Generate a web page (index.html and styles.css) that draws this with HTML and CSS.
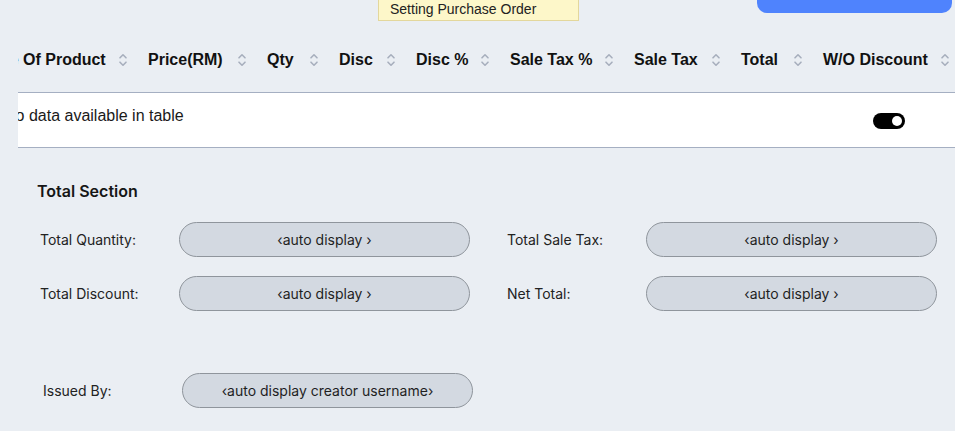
FILE: index.html
```html
<!DOCTYPE html>
<html lang="en">
<head>
<meta charset="utf-8">
<title>Purchase Order</title>
<link rel="stylesheet" href="styles.css">
</head>
<body>
<div class="page">
  <div class="toolbar">
    <button class="btn-primary" type="button">Apply Supplier Copy</button>
  </div>

  <div class="tip">Setting Purchase Order</div>

  <div class="table-scroll">
    <div class="table">
      <div class="thead">
        <div class="th"><span>Name Of Product</span><svg class="sort" viewBox="0 0 10 14" width="10" height="14"><path d="M2 4.8 5 1.8 8 4.8M2 9.2 5 12.2 8 9.2"/></svg></div>
        <div class="th"><span>Price(RM)</span><svg class="sort" viewBox="0 0 10 14" width="10" height="14"><path d="M2 4.8 5 1.8 8 4.8M2 9.2 5 12.2 8 9.2"/></svg></div>
        <div class="th"><span>Qty</span><svg class="sort" viewBox="0 0 10 14" width="10" height="14"><path d="M2 4.8 5 1.8 8 4.8M2 9.2 5 12.2 8 9.2"/></svg></div>
        <div class="th"><span>Disc</span><svg class="sort" viewBox="0 0 10 14" width="10" height="14"><path d="M2 4.8 5 1.8 8 4.8M2 9.2 5 12.2 8 9.2"/></svg></div>
        <div class="th"><span>Disc %</span><svg class="sort" viewBox="0 0 10 14" width="10" height="14"><path d="M2 4.8 5 1.8 8 4.8M2 9.2 5 12.2 8 9.2"/></svg></div>
        <div class="th"><span>Sale Tax %</span><svg class="sort" viewBox="0 0 10 14" width="10" height="14"><path d="M2 4.8 5 1.8 8 4.8M2 9.2 5 12.2 8 9.2"/></svg></div>
        <div class="th"><span>Sale Tax</span><svg class="sort" viewBox="0 0 10 14" width="10" height="14"><path d="M2 4.8 5 1.8 8 4.8M2 9.2 5 12.2 8 9.2"/></svg></div>
        <div class="th"><span>Total</span><svg class="sort" viewBox="0 0 10 14" width="10" height="14"><path d="M2 4.8 5 1.8 8 4.8M2 9.2 5 12.2 8 9.2"/></svg></div>
        <div class="th"><span>W/O Discount</span><svg class="sort" viewBox="0 0 10 14" width="10" height="14"><path d="M2 4.8 5 1.8 8 4.8M2 9.2 5 12.2 8 9.2"/></svg></div>
      </div>
      <div class="trow">
        <span class="empty">No data available in table</span>
        <span class="toggle" role="switch" aria-checked="true"><span class="knob"></span></span>
      </div>
    </div>
  </div>

  <section class="totals">
    <h3 class="totals-title">Total Section</h3>
    <div class="field-grid">
      <div class="field"><span class="label">Total Quantity:</span><span class="pill">‹auto display ›</span></div>
      <div class="field"><span class="label">Total Sale Tax:</span><span class="pill">‹auto display ›</span></div>
      <div class="field"><span class="label">Total Discount:</span><span class="pill">‹auto display ›</span></div>
      <div class="field"><span class="label">Net Total:</span><span class="pill">‹auto display ›</span></div>
    </div>
    <div class="field issued"><span class="label">Issued By:</span><span class="pill">‹auto display creator username›</span></div>
  </section>
</div>
</body>
</html>
```

FILE: styles.css
```css
html, body {
  margin: 0;
  padding: 0;
  height: 100%;
  overflow: hidden;
}

body {
  background: #eaeef3;
  font-family: Inter, "Noto Sans", sans-serif;
  color: #1f1f1f;
}

.page {
  position: relative;
  width: 955px;
}

.toolbar {
  height: 25px;
  display: flex;
  justify-content: flex-end;
  padding-right: 3px;
}

.btn-primary {
  width: 195px;
  height: 40px;
  margin-top: -27px;
  padding: 0 0 5px;
  border: none;
  border-radius: 10px;
  background: #4f83fd;
  color: #ffffff;
  font-family: Inter, sans-serif;
  font-size: 14px;
  font-weight: 500;
}

.tip {
  position: absolute;
  left: 378px;
  top: -1px;
  width: 201px;
  height: 22px;
  box-sizing: border-box;
  padding-left: 11px;
  border: 1px solid #e3d79c;
  background: #fdf7c9;
  font-family: "Liberation Sans", Arial, sans-serif;
  font-size: 14px;
  line-height: 19px;
  color: #222;
  z-index: 5;
}

.table-scroll {
  margin-left: 18px;
  overflow: hidden;
}

.table {
  width: 995px;
  margin-left: -53px;
  font-family: "Liberation Sans", Arial, sans-serif;
}

.thead {
  display: grid;
  grid-template-columns: 173px 119px 72px 77px 94px 124px 107px 82px 147px;
  height: 65px;
  padding-top: 2px;
  border-bottom: 1px solid #a5afc2;
}

.th {
  display: flex;
  align-items: center;
  justify-content: space-between;
  padding: 0 10px;
  font-size: 16px;
  font-weight: 700;
  color: #111;
  white-space: nowrap;
}

.sort {
  flex: none;
  fill: none;
  stroke: #a7afbd;
  stroke-width: 1.6;
  stroke-linecap: round;
  stroke-linejoin: round;
}

.trow {
  display: flex;
  align-items: flex-start;
  height: 55px;
  box-sizing: border-box;
  padding: 11px 55px 0 39px;
  background: #ffffff;
  border-bottom: 1px solid #a5afc2;
}

.empty {
  font-size: 16px;
  line-height: 24px;
  color: #1a1a1a;
}

.toggle {
  margin-left: auto;
  align-self: center;
  margin-top: -10px;
  width: 32px;
  height: 16px;
  border-radius: 8px;
  background: #000;
  display: flex;
  align-items: center;
  justify-content: flex-end;
  padding-right: 3px;
  box-sizing: border-box;
}

.knob {
  width: 10px;
  height: 10px;
  border-radius: 50%;
  background: #fff;
}

.totals {
  padding-left: 37px;
  padding-top: 33px;
}

.totals-title {
  margin: 0;
  font-size: 16px;
  line-height: 20px;
  font-weight: 600;
  color: #161616;
}

.field-grid {
  display: grid;
  grid-template-columns: 430px 430px;
  column-gap: 37px;
  row-gap: 19px;
  margin-top: 21px;
  padding-left: 3px;
}

.field {
  display: grid;
  grid-template-columns: 139px 291px;
  align-items: center;
}

.label {
  font-size: 14px;
  color: #222;
}

.pill {
  height: 35px;
  box-sizing: border-box;
  border: 1px solid #8f959c;
  border-radius: 18px;
  background: #d3d9e1;
  display: flex;
  align-items: center;
  justify-content: center;
  font-size: 14px;
  color: #1f1f1f;
}

.issued {
  margin-top: 62px;
  padding-left: 6px;
}
```
